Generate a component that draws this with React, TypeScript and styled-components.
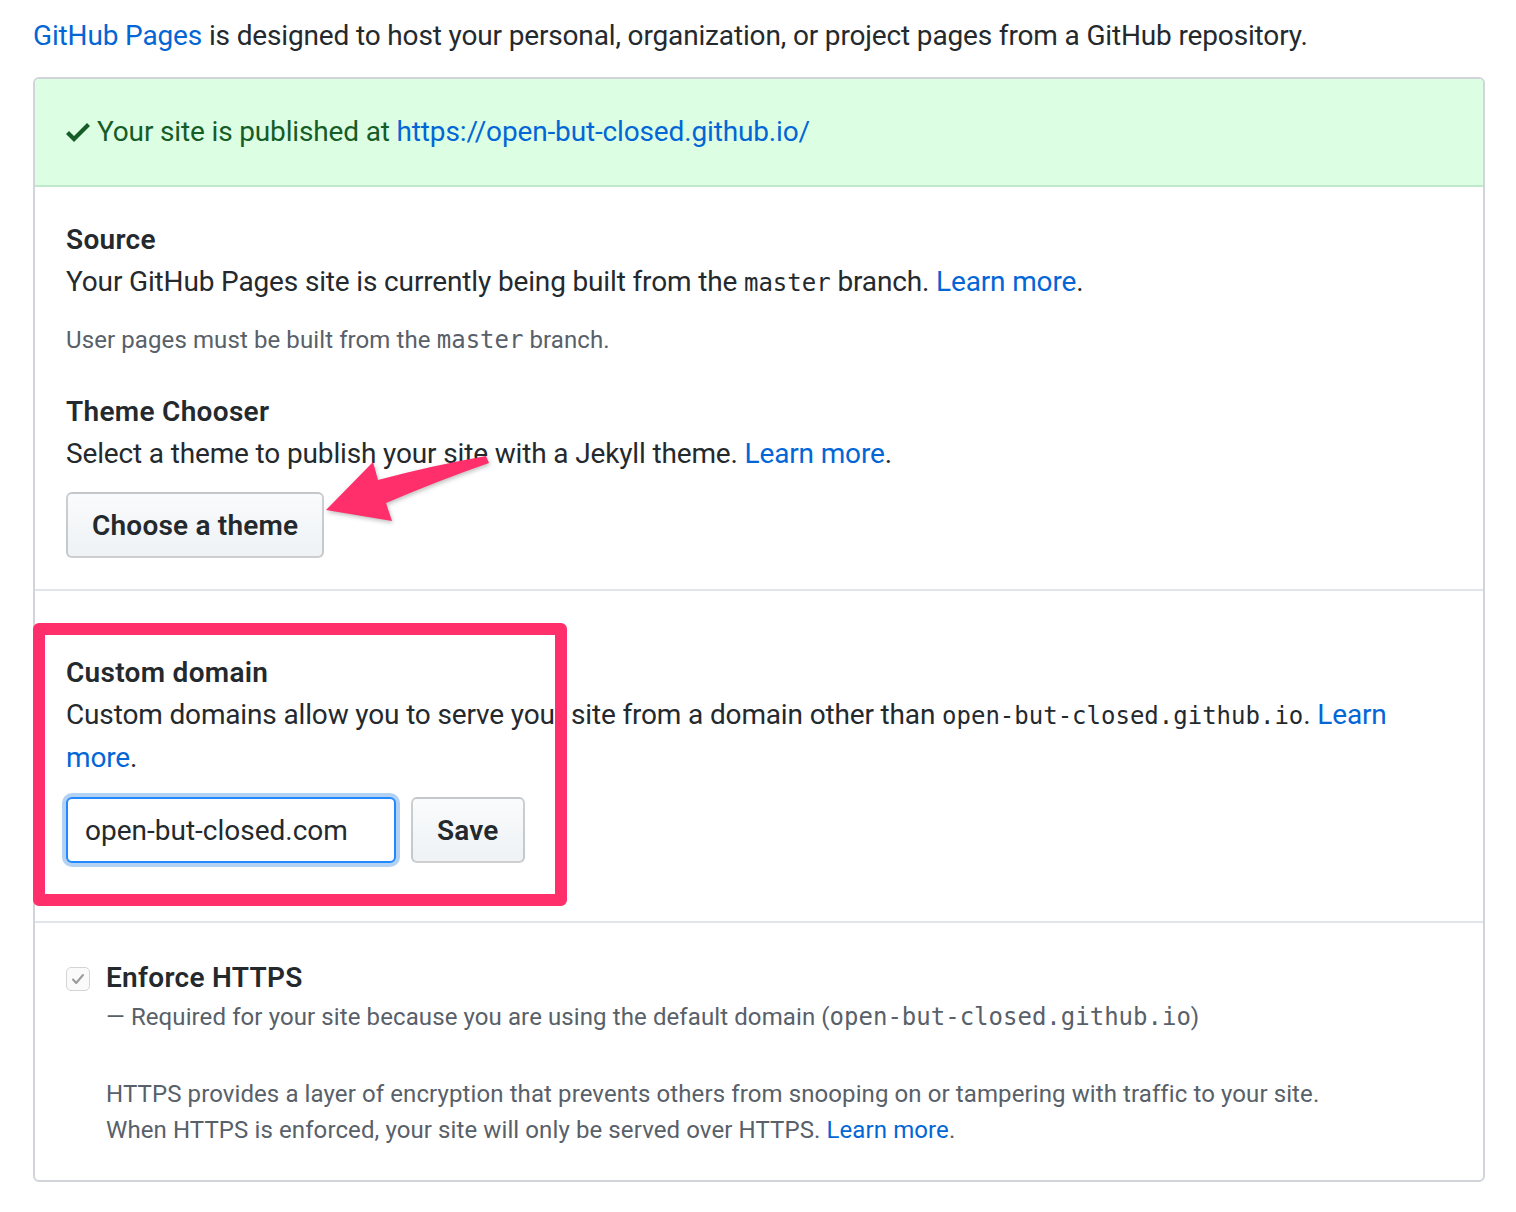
import styled, { createGlobalStyle } from "styled-components";

const GlobalStyle = createGlobalStyle`
  body {
    margin: 0;
    background: #ffffff;
    font-family: Roboto, "Liberation Sans", sans-serif;
    color: #24292e;
  }
`;

const Page = styled.div`
  position: relative;
  padding: 15px 31px 0 33px;
  width: 1452px;
  font-size: 28px;
  line-height: 42px;
  letter-spacing: -0.15px;
`;

const Intro = styled.p`
  margin: 0 0 20px;
`;

const Link = styled.a`
  color: #0366d6;
  text-decoration: none;
`;

const Box = styled.div`
  border: 2px solid #d1d5da;
  border-radius: 6px;
  overflow: hidden;
`;

const Flash = styled.div`
  display: flex;
  align-items: center;
  padding: 32px 31px;
  background: #dcffe4;
  color: #165c26;
  border-bottom: 2px solid #c0e8ca;
`;

const CheckIcon = styled.svg`
  width: 24px;
  height: 32px;
  margin-right: 7px;
  fill: #165c26;
`;

const Section = styled.div<{ $top: number; $bottom: number }>`
  padding: ${(p) => p.$top}px 31px ${(p) => p.$bottom}px;
  & + & {
    border-top: 2px solid #e1e4e8;
  }
`;

const Heading = styled.h3`
  margin: 0;
  font-size: 28px;
  line-height: 42px;
  font-weight: 600;
  letter-spacing: 0.3px;
`;

const Text = styled.p`
  margin: 0;
`;

const Note = styled.p<{ $top?: number }>`
  margin: ${(p) => p.$top ?? 18}px 0 0;
  font-size: 24px;
  line-height: 36px;
  letter-spacing: 0.1px;
  color: #586069;
`;

const Code = styled.code`
  font-family: "DejaVu Sans Mono", "Liberation Mono", monospace;
  font-size: 24px;
  letter-spacing: 0;
`;

const Group = styled.div`
  margin-top: 33px;
`;

const Button = styled.button`
  height: 66px;
  padding: 0 24px;
  font-family: inherit;
  font-size: 28px;
  font-weight: 600;
  letter-spacing: 0.2px;
  color: #24292e;
  background: linear-gradient(#fafbfc, #eff3f6 90%);
  border: 2px solid rgba(27, 31, 35, 0.2);
  border-radius: 6px;
`;

const ThemeButton = styled(Button)`
  margin-top: 17px;
  display: block;
`;

const FormRow = styled.div`
  display: flex;
  align-items: center;
  gap: 15px;
  margin-top: 18px;
`;

const Input = styled.input`
  width: 330px;
  height: 66px;
  box-sizing: border-box;
  padding: 0 17px;
  font-family: inherit;
  font-size: 28px;
  color: #24292e;
  border: 2px solid #2188ff;
  border-radius: 6px;
  box-shadow: 0 0 0 4px rgba(3, 102, 214, 0.3);
  outline: none;
`;

const CheckRow = styled.div`
  display: flex;
  align-items: flex-start;
  gap: 16px;
`;

const Checkbox = styled.span`
  flex: none;
  width: 24px;
  height: 24px;
  margin-top: 10px;
  box-sizing: border-box;
  border: 1px solid #d4d4d4;
  border-radius: 5px;
  background: #fafafa;
  display: flex;
  align-items: center;
  justify-content: center;
`;

const CheckBody = styled.div`
  flex: 1;
`;

const Highlight = styled.div`
  position: absolute;
  left: 33px;
  top: 623px;
  width: 534px;
  height: 283px;
  box-sizing: border-box;
  border: 12px solid #ff2f6c;
  border-radius: 6px;
  pointer-events: none;
`;

const Arrow = styled.svg`
  position: absolute;
  left: 0;
  top: 0;
  width: 600px;
  height: 600px;
  pointer-events: none;
  filter: drop-shadow(1px 2px 2px rgba(0, 0, 0, 0.25));
`;

export default function App() {
  return (
    <Page>
      <GlobalStyle />
      <Intro>
        <Link>GitHub Pages</Link> is designed to host your personal, organization, or project pages from a GitHub repository.
      </Intro>
      <Box>
        <Flash>
          <CheckIcon viewBox="0 0 12 16">
            <path d="M12 5l-8 8-4-4 1.5-1.5L4 10l6.5-6.5L12 5z" />
          </CheckIcon>
          Your site is published at&nbsp;<Link>https://open-but-closed.github.io/</Link>
        </Flash>
        <Section $top={32} $bottom={31}>
          <Heading>Source</Heading>
          <Text>
            Your GitHub Pages site is currently being built from the <Code>master</Code> branch. <Link>Learn more</Link>.
          </Text>
          <Note>
            User pages must be built from the <Code>master</Code> branch.
          </Note>
          <Group>
            <Heading>Theme Chooser</Heading>
            <Text>
              Select a theme to publish your site with a Jekyll theme. <Link>Learn more</Link>.
            </Text>
            <ThemeButton>Choose a theme</ThemeButton>
          </Group>
        </Section>
        <Section $top={61} $bottom={58}>
          <Heading>Custom domain</Heading>
          <Text>
            Custom domains allow you to serve your site from a domain other than <Code>open-but-closed.github.io</Code>. <Link>Learn more</Link>.
          </Text>
          <FormRow>
            <Input defaultValue="open-but-closed.com" />
            <Button>Save</Button>
          </FormRow>
        </Section>
        <Section $top={34} $bottom={32}>
          <CheckRow>
            <Checkbox>
              <svg width="16" height="16" viewBox="0 0 16 16">
                <path d="M3 8.5l3.2 3.5L13 4" fill="none" stroke="#9a9a9a" strokeWidth="2" strokeLinecap="round" strokeLinejoin="round" />
              </svg>
            </Checkbox>
            <CheckBody>
              <Heading>Enforce HTTPS</Heading>
              <Note $top={0}>
                — Required for your site because you are using the default domain (<Code>open-but-closed.github.io</Code>)
              </Note>
              <Note $top={41}>
                HTTPS provides a layer of encryption that prevents others from snooping on or tampering with traffic to your site.
                <br />
                When HTTPS is enforced, your site will only be served over HTTPS. <Link>Learn more</Link>.
              </Note>
            </CheckBody>
          </CheckRow>
        </Section>
      </Box>
      <Highlight />
      <Arrow viewBox="0 0 600 600">
        <path
          d="M326 510 L373 462 L378 480 Q430 466 486 456 L489 463 Q440 480 386 503 L392 521 Z"
          fill="#ff2f6c"
        />
      </Arrow>
    </Page>
  );
}
